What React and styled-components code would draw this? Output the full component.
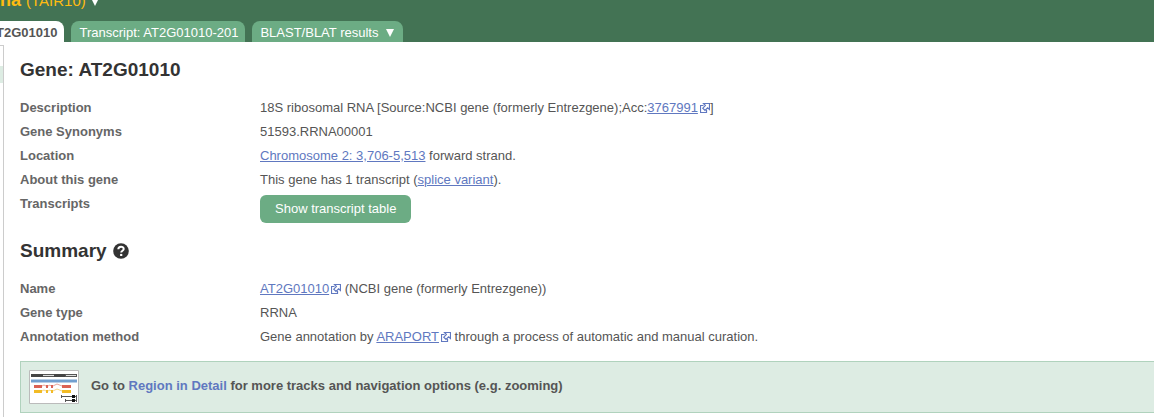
import React from 'react';
import styled, { createGlobalStyle } from 'styled-components';

const GlobalStyle = createGlobalStyle`
  * { box-sizing: border-box; }
  body {
    margin: 0;
    background: #fff;
    color: #555;
    font: 13px/24px "Liberation Sans", Arial, sans-serif;
    overflow-x: hidden;
  }
`;

const Header = styled.header`
  display: flex;
  flex-direction: column;
  height: 42px;
  overflow: hidden;
  justify-content: flex-end;
  background: #437354;
`;

const Species = styled.div`
  display: flex;
  flex: none;
  align-items: baseline;
  gap: 5px;
  height: 33px;
  color: #fb1;
  font-size: 15px;
  line-height: 24px;
  white-space: nowrap;
`;

const SpeciesName = styled.strong`
  font-size: 18px;
`;

const Arrow = styled.svg`
  width: 8px;
  height: 8px;
  fill: #fff;
`;

const Tabs = styled.nav`
  display: flex;
  flex: none;
  gap: 7px;
  margin-left: -12px;
`;

const Tab = styled.a`
  display: flex;
  align-items: center;
  gap: 8px;
  height: 21px;
  padding: 2px 7px 0 8px;
  border-radius: 8px 8px 0 0;
  background: ${(p) => (p.$active ? '#fff' : '#6cac84')};
  color: ${(p) => (p.$active ? '#555' : '#fff')};
  font-weight: ${(p) => (p.$active ? 'bold' : 'normal')};
  text-decoration: none;
  white-space: nowrap;

  ${Arrow} {
    margin-right: 2px;
  }
`;

const Page = styled.div`
  display: flex;
`;

const Sidebar = styled.aside`
  flex: none;
  width: 4px;
  margin-top: 3px;
  padding-top: 20px;
  border-top: 1px solid #ccc;
  border-right: 1px solid #ccc;
`;

const SidebarItem = styled.div`
  height: 17px;
  background: #ddece3;
`;

const Main = styled.main`
  flex: 1;
  min-width: 0;
  padding: 16px 0 4px 16px;
`;

const Heading = styled.h1`
  display: flex;
  align-items: center;
  gap: 6px;
  margin: 0 0 14px;
  color: #333;
  font-size: 19px;
  line-height: 24px;
`;

const Details = styled.dl`
  display: grid;
  grid-template-columns: 240px 1fr;
  margin: 0 0 12px;
`;

const Term = styled.dt`
  font-weight: bold;
  color: #666;
`;

const Value = styled.dd`
  margin: 0;
`;

const Link = styled.a`
  color: #6078c0;
  text-underline-offset: 1px;
`;

const External = styled.svg`
  width: 10px;
  height: 10px;
  margin-left: 2px;
  vertical-align: -1px;
  fill: #fff;
  stroke: #6078c0;
  stroke-width: 1.2;
`;

const Button = styled.button`
  display: block;
  height: 28px;
  margin: 3px 0 4px;
  padding: 0 15px;
  border: 0;
  border-radius: 6px;
  background: #6cac84;
  color: #fff;
  font: inherit;
`;

const HelpIcon = styled.svg`
  width: 16px;
  height: 16px;
`;

const Hint = styled.section`
  display: flex;
  align-items: center;
  gap: 12px;
  height: 52px;
  padding: 0 8px;
  border: 1px solid #b0d2bd;
  border-right: 0;
  background: #ddece3;
  font-weight: bold;
`;

const HintText = styled.p`
  margin: 0;
  padding-bottom: 2px;
`;

const HintLink = styled.a`
  color: #6078c0;
  text-decoration: none;
`;

const Thumbnail = styled.svg`
  width: 50px;
  height: 34px;
`;

const DownArrow = () => (
  <Arrow viewBox="0 0 8 8" aria-hidden="true">
    <path d="M0 0h8L4 8z" />
  </Arrow>
);

const ExternalLink = ({ children }) => (
  <>
    <Link href="#">{children}</Link>
    <External viewBox="0 0 10 10" aria-hidden="true">
      <path d="M3.500 2.500H.5v7h6V7" />
      <path d="M3.500 .5h6v6L7.600 4.800 5 7.400 2.800 5.200 5.400 2.500z" />
    </External>
  </>
);

const RegionThumbnail = () => (
  <Thumbnail viewBox="0 0 50 34" aria-hidden="true">
    <path d="M.5.5h49v33H.5z" fill="#fff" stroke="#bbb" />
    <path d="M2 4h46v3H2z" fill="#555" />
    <path d="M14 5.500h11M37 5.500h10" stroke="#ddd" />
    <path d="M2 4h12v3H2zM25 4h11v3H25z" fill="#444" />
    <path d="M2 9.500h46v3H2z" fill="#729fcf" />
    <path d="M5 15h8v3H5zM17 15h2v3h-2zM22 15h2v3h-2zM33 15h9v3h-9z" fill="#db6255" />
    <path d="M5 20h8v3H5zM17 20h2v3h-2zM22 20h2v3h-2zM33 20h9v3h-9z" fill="#f2bb25" />
    <path d="M13 16l2-1 2 1M19 16l2-1 1 1M24 16l4-2 5 2" fill="none" stroke="#e9a59c" />
    <path d="M13 21l2-1 2 1M19 21l2-1 1 1M24 21l4-2 5 2" fill="none" stroke="#f5d586" />
    <path d="M32 26.500h16M36 30.500h12M32.500 25v3M36.500 29v3M47.500 25v7" stroke="#555" fill="none" />
    <path d="M43 25h3v3h-3zM43 29h3v3h-3z" fill="#111" />
  </Thumbnail>
);

export default function App() {
  return (
    <>
      <GlobalStyle />
      <Header>
        <Species>
          <SpeciesName>na</SpeciesName>
          <span>(TAIR10)</span>
          <DownArrow />
        </Species>
        <Tabs>
          <Tab href="#" $active>T2G01010</Tab>
          <Tab href="#">Transcript: AT2G01010-201</Tab>
          <Tab href="#">
            BLAST/BLAT results
            <DownArrow />
          </Tab>
        </Tabs>
      </Header>
      <Page>
        <Sidebar>
          <SidebarItem />
        </Sidebar>
        <Main>
          <Heading>Gene: AT2G01010</Heading>
          <Details>
            <Term>Description</Term>
            <Value>
              18S ribosomal RNA [Source:NCBI gene (formerly Entrezgene);Acc:
              <ExternalLink>3767991</ExternalLink>]
            </Value>
            <Term>Gene Synonyms</Term>
            <Value>51593.RRNA00001</Value>
            <Term>Location</Term>
            <Value>
              <Link href="#">Chromosome 2: 3,706-5,513</Link> forward strand.
            </Value>
            <Term>About this gene</Term>
            <Value>
              This gene has 1 transcript (<Link href="#">splice variant</Link>).
            </Value>
            <Term>Transcripts</Term>
            <Value>
              <Button type="button">Show transcript table</Button>
            </Value>
          </Details>
          <Heading as="h2">
            Summary
            <HelpIcon viewBox="0 0 16 16" aria-hidden="true">
              <circle cx="8" cy="8" r="7.800" fill="#333" />
              <path d="M5.300 6.200C5.400 2.800 10.700 2.900 10.700 6c0 1.800-2.500 1.700-2.500 3.600" fill="none" stroke="#fff" strokeWidth="2" />
              <path d="M7.100 10.900h2.200v2.100H7.100z" fill="#fff" />
            </HelpIcon>
          </Heading>
          <Details>
            <Term>Name</Term>
            <Value>
              <ExternalLink>AT2G01010</ExternalLink> (NCBI gene (formerly Entrezgene))
            </Value>
            <Term>Gene type</Term>
            <Value>RRNA</Value>
            <Term>Annotation method</Term>
            <Value>
              Gene annotation by <ExternalLink>ARAPORT</ExternalLink> through a process of automatic and manual curation.
            </Value>
          </Details>
          <Hint>
            <RegionThumbnail />
            <HintText>
              Go to <HintLink href="#">Region in Detail</HintLink> for more tracks and navigation options (e.g. zooming)
            </HintText>
          </Hint>
        </Main>
      </Page>
    </>
  );
}
